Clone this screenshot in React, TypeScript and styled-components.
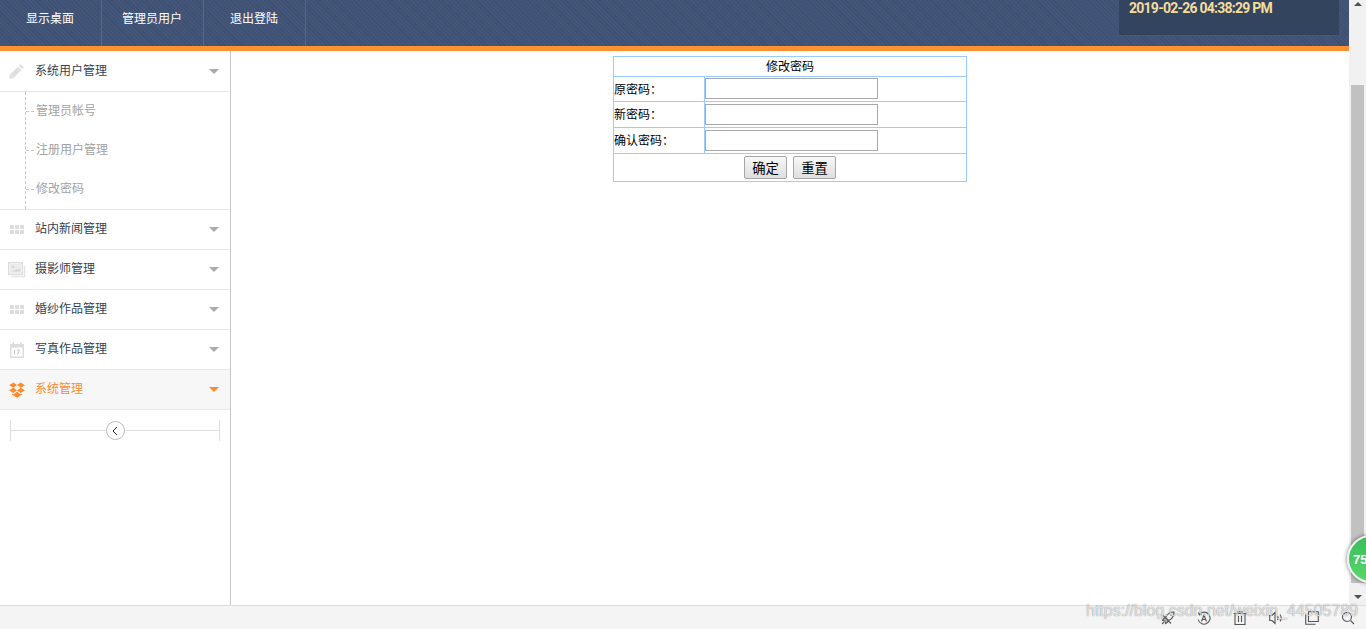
import React from "react";
import styled, {createGlobalStyle} from "styled-components";

const CJK = `"Noto Sans CJK SC", "Liberation Sans", sans-serif`;

const GlobalStyle = createGlobalStyle`
  html, body {
    margin: 0;
    padding: 0;
    overflow: hidden;
    background: #fff;
  }
  * {
    box-sizing: border-box;
  }
`;

const Shell = styled.div`
  position: relative;
  width: 1366px;
  height: 629px;
  display: grid;
  grid-template-columns: 1349px 17px;
  grid-template-rows: 605px 24px;
  overflow: hidden;
  font-family: ${CJK};
  font-size: 12px;
`;

const Page = styled.div`
  display: flex;
  flex-direction: column;
  min-height: 0;
`;

const Header = styled.header`
  flex: none;
  height: 51px;
  display: flex;
  justify-content: space-between;
  border-bottom: 5px solid #ff9130;
  background-color: #43567a;
  background-image: repeating-linear-gradient(45deg, rgba(0, 0, 0, .07) 0 1px, transparent 1px 3px);
`;

const Nav = styled.nav`
  display: flex;
`;

const NavItem = styled.a`
  width: 102px;
  height: 46px;
  padding: 0 1px 10px 0;
  display: flex;
  align-items: center;
  justify-content: center;
  border-right: 1px solid #586983;
  color: #fff;
  font-size: 12px;
  line-height: 16px;
`;

const Clock = styled.div`
  width: 220px;
  height: 36px;
  margin-right: 10px;
  padding: 0 10px;
  background: #33445f;
  border-bottom: 1px solid #465a78;
  color: #f5dd9a;
  font-family: Roboto, "Liberation Sans", sans-serif;
  font-size: 14px;
  font-weight: 700;
  line-height: 16px;
  letter-spacing: -.75px;
`;

const Body = styled.div`
  flex: 1;
  display: flex;
  min-height: 0;
`;

const Sidebar = styled.aside`
  flex: none;
  width: 231px;
  border-right: 1px solid #c8c8c8;
`;

const MenuRow = styled.div<{ $active?: boolean; $first?: boolean }>`
  height: ${props => props.$first ? 41 : 40}px;
  padding: 0 11px 0 8px;
  display: flex;
  align-items: center;
  border-bottom: 1px solid #e9e9e9;
  background: ${props => props.$active ? "#f7f7f7" : "#fff"};
  color: ${props => props.$active ? "#ff8a2b" : "#333f52"};
`;

const MenuIcon = styled.span`
  flex: none;
  width: 27px;
  height: 18px;
  display: flex;
  align-items: center;
`;

const MenuLabel = styled.span<{ $first?: boolean }>`
  flex: 1;
  padding-bottom: ${props => props.$first ? 2 : 4}px;
  line-height: 16px;
`;

const Caret = styled.i<{ $active?: boolean }>`
  width: 0;
  height: 0;
  border-left: 5px solid transparent;
  border-right: 5px solid transparent;
  border-top: 5px solid ${props => props.$active ? "#ff8a2b" : "#aaa"};
`;

const SubMenu = styled.div`
  margin-left: 25px;
  border-left: 1px dashed #c8c8c8;
`;

const SubMenuWrap = styled.div`
  border-bottom: 1px solid #e9e9e9;
`;

const SubRow = styled.div`
  height: 39px;
  padding-bottom: 4px;
  display: flex;
  align-items: center;
  color: #a2a2a2;
  line-height: 16px;
`;

const SubDash = styled.i`
  width: 10px;
  height: 1px;
  margin-top: 4px;
  background: repeating-linear-gradient(90deg, #c8c8c8 0 3px, transparent 3px 5px);
`;

const Collapse = styled.div`
  height: 21px;
  margin: 10px 10px 0;
  width: 210px;
  display: flex;
  align-items: center;
  justify-content: center;
  border-left: 1px solid #ddd;
  border-right: 1px solid #ddd;
  background: linear-gradient(#ddd, #ddd) center / 100% 1px no-repeat;
`;

const CollapseButton = styled.span`
  width: 19px;
  height: 19px;
  display: flex;
  align-items: center;
  justify-content: center;
  border: 1px solid #bbb;
  border-radius: 50%;
  background: #fff;
`;

const Main = styled.main`
  flex: 1;
  padding-top: 5px;
  display: flex;
  justify-content: center;
  align-items: flex-start;
`;

const PasswordTable = styled.table`
  width: 354px;
  height: 126px;
  border-collapse: collapse;
  border: 1px solid #99ccff;
  color: #000;
  font-size: 12px;
  table-layout: fixed;
`;

const Cell = styled.td<{ $height: number }>`
  height: ${props => props.$height}px;
  padding: 0;
  border: 1px solid #99ccff;
  line-height: 14px;
`;

const Title = styled(Cell)`
  padding-bottom: 2px;
  text-align: center;
`;

const Label = styled(Cell)`
  padding-bottom: 1px;
`;

const Field = styled.input`
  display: block;
  width: 173px;
  height: 21px;
  margin: 0 0 1px;
  padding: 1px 2px;
  border: 1px solid #a9a9a9;
  background: #fff;
`;

const Actions = styled.div`
  display: flex;
  justify-content: center;
  gap: 6px;
`;

const Button = styled.button`
  width: 43px;
  height: 23px;
  padding: 0;
  border: 1px solid #a6a6a6;
  border-radius: 2px;
  background: linear-gradient(#f8f8f8, #dedede);
  color: #000;
  font-family: ${CJK};
  font-size: 13.33px;
  line-height: 15px;
`;

const Scrollbar = styled.div`
  position: relative;
  background: #f1f1f1;
  display: flex;
  flex-direction: column;
  align-items: center;
  justify-content: space-between;
  padding: 2px 0 6px;
`;

const ScrollArrow = styled.i<{ $up?: boolean }>`
  width: 0;
  height: 0;
  border-left: 4px solid transparent;
  border-right: 4px solid transparent;
  border-${props => props.$up ? "bottom" : "top"}: 4px solid #505050;
`;

const ScrollThumb = styled.div`
  position: absolute;
  top: 85px;
  left: 2px;
  width: 13px;
  height: 498px;
  background: #c1c1c1;
`;

const Ball = styled.div`
  position: absolute;
  left: 1347px;
  top: 535px;
  width: 48px;
  height: 48px;
  padding-left: 4px;
  display: flex;
  align-items: center;
  border: 2px solid #f1f1f1;
  border-radius: 50%;
  background: linear-gradient(#37bd5b, #59d868);
  box-shadow: 0 0 4px rgba(0, 0, 0, .55);
  color: #fff;
  font-family: "Liberation Sans", sans-serif;
  font-size: 13px;
  font-weight: 700;
`;

const BottomBar = styled.footer`
  grid-column: 1 / 3;
  padding-left: 1161px;
  display: flex;
  align-items: center;
  gap: 22px;
  border-top: 1px solid #dcdcdc;
  background: #f4f4f4;
`;

const ToolIcon = styled.svg`
  flex: none;
  width: 14px;
  height: 14px;
  margin-top: 1px;
  fill: none;
  stroke: #555;
  stroke-width: 1.1;
`;

const Watermark = styled.div`
  position: absolute;
  left: 1086px;
  top: 601px;
  color: rgba(255, 255, 255, .75);
  font-family: "Liberation Sans", sans-serif;
  font-size: 16px;
  line-height: 20px;
  text-shadow: 0 0 1px rgba(0, 0, 0, .55);
  white-space: nowrap;
`;

const GridIcon = () => (
  <svg width="17" height="9" viewBox="-2 0 17 9" fill="#dcdcdc">
    {[0, 5, 10].map(x => [0, 5].map(y => <rect key={`${x}-${y}`} x={x} y={y} width="4" height="4" />))}
  </svg>
);

const PencilIcon = () => (
  <svg width="17" height="17" viewBox="0 0 17 17" fill="#e0e0e0">
    <path d="M12.500 1l3.500 3.500-1.700 1.700-3.500-3.500zM10 3.500l3.500 3.500-8 8-4.500 1 1-4.500z" />
  </svg>
);

const ImageIcon = () => (
  <svg width="18" height="16" viewBox="0 0 18 16">
    <path d="M3 14.500h13.500V4" fill="none" stroke="#e4e4e4" strokeWidth="1.5" />
    <rect x=".7" y=".7" width="13.6" height="11.6" fill="none" stroke="#dcdcdc" strokeWidth="1.4" />
    <rect x="2" y="2" width="11" height="9" fill="#ececec" />
    <circle cx="5" cy="5" r="1.2" fill="#d0d0d0" />
    <path d="M3 9.500h9V6.500l-2 1.500-2-.5-1 1z" fill="#d0d0d0" />
  </svg>
);

const CalendarIcon = () => (
  <svg width="16.5" height="16" viewBox="-1.5 0 16.5 16">
    <path d="M.5 2h14v14H.5z" fill="#dcdcdc" />
    <rect x="2" y="5.500" width="11" height="9" fill="#fff" />
    <path d="M3 0h1.500v3H3zM10.500 0H12v3h-1.500z" fill="#dcdcdc" />
    <path d="M5 8v4.500M7.500 8H10L8 12.500" fill="none" stroke="#c4c4c4" />
  </svg>
);

const BoxIcon = () => (
  <svg width="17" height="16" viewBox="-1 0 17 16" fill="#ff8a2b">
    <path d="M4.300.5L8 3 4.300 5.700.2 3.200zM11.700.5L16 3.200l-4.200 2.500L8 3zM.2 8.200l4.100-2.500L8 8.300l-3.700 2.600zM15.900 8.200l-4.200-2.500L8 8.300l3.700 2.600z" />
    <path d="M3 11.400l1.300.8L8 9.700l3.700 2.500 1.300-.8v1.200L8 15.800l-5-3.200z" />
  </svg>
);

const menuBelow: { label: string; icon: React.ReactNode }[] = [
  {label: "站内新闻管理", icon: <GridIcon />},
  {label: "摄影师管理", icon: <ImageIcon />},
  {label: "婚纱作品管理", icon: <GridIcon />},
  {label: "写真作品管理", icon: <CalendarIcon />},
];

const subItems = ["管理员帐号", "注册用户管理", "修改密码"];

const passwordFields = [
  {label: "原密码：", height: 25},
  {label: "新密码：", height: 26},
  {label: "确认密码：", height: 26},
];

export default function App() {
  return (
    <Shell>
      <GlobalStyle />
      <Page>
        <Header>
          <Nav>
            <NavItem>显示桌面</NavItem>
            <NavItem>管理员用户</NavItem>
            <NavItem>退出登陆</NavItem>
          </Nav>
          <Clock>2019-02-26 04:38:29 PM</Clock>
        </Header>
        <Body>
          <Sidebar>
            <MenuRow $first>
              <MenuIcon><PencilIcon /></MenuIcon>
              <MenuLabel $first>系统用户管理</MenuLabel>
              <Caret />
            </MenuRow>
            <SubMenuWrap>
              <SubMenu>
                {subItems.map(item => (
                  <SubRow key={item}>
                    <SubDash />
                    {item}
                  </SubRow>
                ))}
              </SubMenu>
            </SubMenuWrap>
            {menuBelow.map(item => (
              <MenuRow key={item.label}>
                <MenuIcon>{item.icon}</MenuIcon>
                <MenuLabel>{item.label}</MenuLabel>
                <Caret />
              </MenuRow>
            ))}
            <MenuRow $active>
              <MenuIcon><BoxIcon /></MenuIcon>
              <MenuLabel>系统管理</MenuLabel>
              <Caret $active />
            </MenuRow>
            <Collapse>
              <CollapseButton>
                <svg width="8" height="10" viewBox="0 0 8 10" fill="none" stroke="#222" strokeWidth="1">
                  <path d="M6 1L2 5l4 4" />
                </svg>
              </CollapseButton>
            </Collapse>
          </Sidebar>
          <Main>
            <PasswordTable>
              <colgroup>
                <col width="91" />
                <col />
              </colgroup>
              <tbody>
                <tr>
                  <Title colSpan={2} $height={20}>修改密码</Title>
                </tr>
                {passwordFields.map(field => (
                  <tr key={field.label}>
                    <Label $height={field.height}>{field.label}</Label>
                    <Cell $height={field.height}><Field type="text" /></Cell>
                  </tr>
                ))}
                <tr>
                  <Cell colSpan={2} $height={28}>
                    <Actions>
                      <Button>确定</Button>
                      <Button>重置</Button>
                    </Actions>
                  </Cell>
                </tr>
              </tbody>
            </PasswordTable>
          </Main>
        </Body>
      </Page>
      <Scrollbar>
        <ScrollArrow $up />
        <ScrollThumb />
        <ScrollArrow />
      </Scrollbar>
      <BottomBar>
        <ToolIcon viewBox="0 0 14 14">
          <path d="M13 1C9 1 6 3 4.500 6.500l3 3C11 8 13 5 13 1zM5 7L2.500 7.500 1.500 9.500l3-.5M7 9l-.5 2.500-2 1 .5-3M3.500 10.500L1 13M9.500 3.500l1 1M1.500 4l8.500 8.500" />
        </ToolIcon>
        <ToolIcon viewBox="0 0 14 14">
          <path d="M2.300 3.500A6 6 0 1 1 1.200 8.500M1.500 1.500l.8 2.300 2.300-.6M4.500 10.500L7 4l2.500 6.500M5 8.500h4" />
        </ToolIcon>
        <ToolIcon viewBox="0 0 14 14">
          <path d="M.5 2.500h13M5 2.500V.7h4v1.800M2 2.500v11h10v-11M5.500 5v6M8.500 5v6" />
        </ToolIcon>
        <ToolIcon viewBox="0 0 14 14">
          <path d="M6 1.500L3 4.500H.7v5H3l3 3zM8.500 5c.8 1.200.8 2.800 0 4M11 3.500c1.500 2.200 1.500 4.800 0 7" />
        </ToolIcon>
        <ToolIcon viewBox="0 0 14 14">
          <path d="M3.500.7h9.800v9.800H3.500zM.7 3.500v9.800h9.800" />
        </ToolIcon>
        <ToolIcon viewBox="0 0 14 14">
          <circle cx="6" cy="6" r="4.500" />
          <path d="M9.500 9.500L13 13" />
        </ToolIcon>
      </BottomBar>
      <Ball>75</Ball>
      <Watermark>https://blog.csdn.net/weixin_44505789</Watermark>
    </Shell>
  );
}
